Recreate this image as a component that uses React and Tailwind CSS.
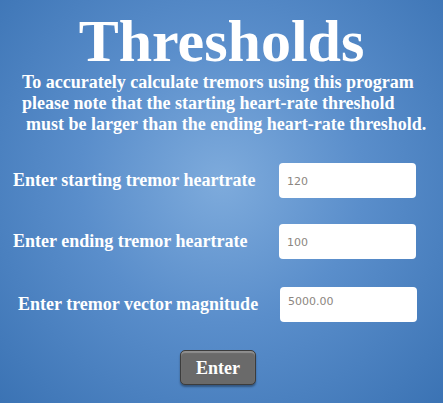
import React from "react";

const serif = { fontFamily: '"Liberation Serif", "Times New Roman", serif' };

const rows = [
  { label: "Enter starting tremor heartrate", value: "120", pad: "pl-[13px]", inputMl: "ml-[279px]", field: "pt-[1px]" },
  { label: "Enter ending tremor heartrate", value: "100", pad: "pl-[13px]", inputMl: "ml-[279px]", field: "pt-[1px]" },
  { label: "Enter tremor vector magnitude", value: "5000.00", pad: "pl-[18px]", inputMl: "ml-[280px]", field: "pb-[6px]" },
];

const App = () => {
  return (
    <div
      className="w-full h-[403px] overflow-hidden bg-[radial-gradient(ellipse_at_50%_45%,#7eabdc_0%,#5a8ecb_45%,#3b73b4_100%)] text-white"
      style={serif}
    >
      <h1 className="pt-[14px] text-center text-[60px] leading-[54px] font-bold">
        Thresholds
      </h1>

      <div className="mt-[4px] text-[18px] leading-[21px] font-bold">
        <div className="pl-[22px]">To accurately calculate tremors using this program</div>
        <div className="pl-[22px]">please note that the starting heart-rate threshold</div>
        <div className="pl-[26px]">must be larger than the ending heart-rate threshold.</div>
      </div>

      <div className="mt-[28px] flex flex-col gap-[26px]">
        {rows.map((r, i) => (
          <div key={i} className={"relative flex items-center h-[35px] " + (i === 2 ? "mt-[2px]" : "")}>
            <span className={"absolute left-0 text-[18px] leading-[21px] font-bold " + r.pad}>
              {r.label}
            </span>
            <input
              className={
                "w-[137px] h-[35px] rounded-[4px] bg-white pl-[8px] text-[11px] text-[#8c8680] outline-none " +
                r.inputMl +
                " " +
                r.field
              }
              style={{ fontFamily: '"DejaVu Sans", Verdana, sans-serif' }}
              defaultValue={r.value}
            />
          </div>
        ))}
      </div>

      <div className="mt-[28px] flex">
        <button
          className="ml-[180px] w-[76px] h-[35px] rounded-[5px] border border-[#3c3c3c] bg-[#6a6a6a] shadow-[inset_0_2px_1px_rgba(255,255,255,0.25),0_2px_2px_rgba(0,0,0,0.35)] text-white text-[18px] font-bold leading-none"
          style={serif}
        >
          Enter
        </button>
      </div>
    </div>
  );
};

export default App;
